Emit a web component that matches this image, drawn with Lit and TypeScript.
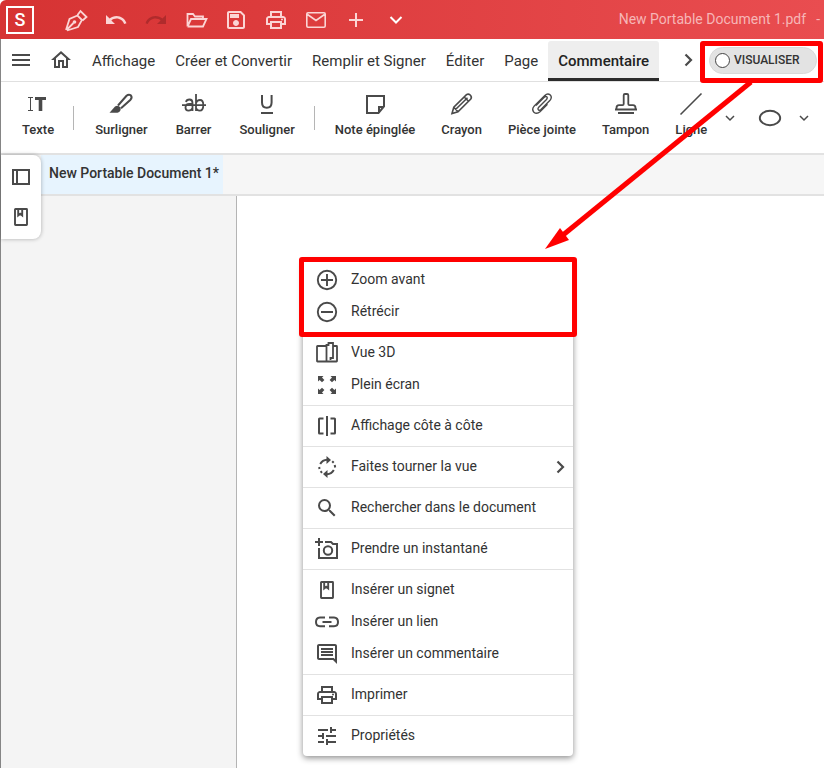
import { LitElement, html, css, svg, nothing, type SVGTemplateResult } from "lit";
import { customElement, property } from "lit/decorators.js";

// Icons share a 24x24 grid. "o" marks outline shapes, "f" filled ones.
const o = (d: string, w = 2) =>
  svg`<path d=${d} fill="none" stroke="currentColor" stroke-width=${w}></path>`;
const f = (d: string) => svg`<path d=${d} fill="currentColor" fill-rule="evenodd"></path>`;

const icons: Record<string, SVGTemplateResult> = {
  pen: svg`${o("M2 22 L5.5 11 L13.5 7.5 L18 12 L14 19 L3 22.5 M2.5 22 L9.5 15 M13.5 7 L16.5 3 L22.5 9 L18.5 12.5", 1.8)}<circle cx="10.5" cy="14" r="1.8" fill="currentColor"></circle>`,
  undo: f("M12.5 8c-2.65 0-5.05.99-6.9 2.6L2 7v9h9l-3.62-3.62c1.39-1.16 3.16-1.88 5.12-1.88 3.54 0 6.55 2.31 7.6 5.5l2.37-.78C21.08 11.03 17.15 8 12.5 8z"),
  redo: f("M18.4 10.6C16.55 8.99 14.15 8 11.5 8c-4.65 0-8.58 3.03-9.96 7.22L3.9 16c1.05-3.19 4.05-5.5 7.6-5.5 1.95 0 3.73.72 5.12 1.88L13 16h9V7l-3.6 3.6z"),
  folder: o("M3.5 18.500 V6 H9 L11 8.500 H19 V11 M3.500 18.500 L7 11 H22.500 L19 18.500 H3.500", 1.8),
  save: f("M17 3H5c-1.11 0-2 .9-2 2v14c0 1.1.89 2 2 2h14c1.1 0 2-.9 2-2V7l-4-4zm2 16H5V5h11.17L19 7.83V19zm-7-7c-1.66 0-3 1.34-3 3s1.34 3 3 3 3-1.34 3-3-1.34-3-3-3zM6 6h9v4H6V6z"),
  print: f("M19 8h-1V3H6v5H5c-1.66 0-3 1.34-3 3v6h4v4h12v-4h4v-6c0-1.66-1.34-3-3-3zM8 5h8v3H8V5zm8 12v2H8v-4h8v2zm2-2v-2H6v2H4v-4c0-.55.45-1 1-1h14c.55 0 1 .45 1 1v4h-2zM17 11.5a1 1 0 1 0 2 0a1 1 0 1 0-2 0z"),
  mail: o("M4 4.8 H20 Q21.2 4.8 21.2 6 V18 Q21.2 19.2 20 19.2 H4 Q2.8 19.2 2.8 18 V6 Q2.8 4.8 4 4.8 Z M3.5 6.5 L12 12.5 L20.5 6.5", 1.6),
  plus: o("M12 5 V19 M5 12 H19"),
  down: o("M6.5 9 L12 14.5 L17.5 9"),
  smallDown: o("M8 10 L12 14 L16 10", 1.5),
  right: o("M8.5 6.5 L14 12 L8.5 17.5", 2.2),
  menu: o("M3 7 H21 M3 12 H21 M3 17 H21"),
  home: f("M12 5.69l5 4.5V18h-2v-6H9v6H7v-7.81l5-4.5M12 3L2 12h3v8h6v-6h2v6h6v-8h3L12 3z"),
  text: svg`${o("M2 5.5 H7 M4.500 5.5 V18.5 M2 18.5 H7", 1)}${f("M9 5H20V8H16.300V19H12.700V8H9Z")}`,
  highlight: svg`${f("M0.500 20.700 L6 14.500 Q9 12.500 11.500 15.500 Q12.500 19.500 8.500 20.700 Z")}${o("M9 13.500 L17.500 3.800 Q19.700 1.800 21.800 3.300 Q23.500 5.300 21.500 7.700 L12 16.300", 2)}`,
  strike: o("M4 10 Q4.500 7.500 7.500 7.500 Q10.500 7.500 10.500 11 V19 M10.500 12 H7.500 Q3.500 12 3.500 15.500 Q3.500 18.700 6.500 18.700 Q9.500 18.700 10.500 16 M14 2 V19 M14 11 Q15 8 18 8 Q21.300 8 21.300 13 Q21.300 18.700 17.700 18.700 Q15 18.700 14 16 M0 13.200 H24", 1.8),
  underline: o("M7 3 V10.500 Q7 15.700 11.800 15.700 Q16.600 15.700 16.600 10.500 V3 M6 21 H18", 2),
  note: o("M4 4 H21 V14.500 L15.500 21 H4 Z M21 15 H16 V21", 2),
  pencil: o("M2 21.500 L3.800 15.200 L16.500 2.700 Q18.300 1.300 20.200 3 Q22.200 5 20.800 7 L8 19.800 Z M14.200 5 L18.600 9.300 M3.800 15.200 L8 19.800 M5.500 17.500 L17.500 5.800", 1.6),
  clip: o("M16.500 7.500 L8.500 15.500 Q7.300 17 8.500 18 Q9.500 18.800 10.700 17.700 L19.800 8.600 Q22.500 5.500 20.300 3 Q17.700 0.800 14.800 3.400 L4.300 13.900 Q1.300 17.300 3.900 20.200 Q6.800 22.600 10 19.700 L17.500 12.200 M16.500 7.500 Q18 5.500 16.500 4.700 Q15.300 4.200 14 5.500 L6 13.500", 1.4),
  stamp: o("M2.500 17 V16 Q2.500 13.200 5 13.200 H8.500 Q9.700 13.200 9.700 12 V3.300 Q9.700 2 11 2 H13 Q14.300 2 14.300 3.300 V12 Q14.300 13.200 15.500 13.200 H19 Q21.500 13.200 21.500 16 V17 M1 17.500 H23 M4 21 H20", 1.8),
  line: o("M1.500 22.500 L22.500 1.500", 1.6),
  ellipse: svg`<ellipse cx="12" cy="12" rx="10.200" ry="7.200" fill="none" stroke="currentColor" stroke-width="1.900"></ellipse>`,
  panel: o("M4 5 H20 V19 H4 Z M8 5 V19", 2),
  bookmark: o("M6.500 4 H17.500 Q18 4 18 4.500 V19.500 Q18 20 17.500 20 H6.500 Q6 20 6 19.500 V4.500 Q6 4 6.500 4 Z M9.200 4 V10.500 L11.200 8.800 L13.200 10.500 V4", 1.9),
  zoomIn: o("M12 2.800 A9.200 9.200 0 1 0 12 21.200 A9.200 9.200 0 1 0 12 2.800 Z M12 6 V18 M6 12 H18", 1.9),
  zoomOut: o("M12 2.800 A9.200 9.200 0 1 0 12 21.200 A9.200 9.200 0 1 0 12 2.800 Z M6 12 H18", 1.9),
  book: o("M11.500 5 H2.500 Q2 5 2 5.500 V20 Q2 20.500 2.500 20.500 H11.500 M11.500 20.500 V4 H13.500 V2 H18 V17 H15.500 V19 M18 5 H21.500 Q22 5 22 5.500 V20 Q22 20.500 21.500 20.500 H11.500", 1.8),
  full: f("M3 3H8.500L7 4.500L9.400 6.900L7 9.300L4.600 6.900L3 8.500ZM21 3V8.500L19.400 6.900L17 9.300L14.600 6.900L17 4.500L15.500 3ZM3 21V15.500L4.600 17.100L7 14.700L9.400 17.100L7 19.500L8.500 21ZM21 21H15.500L17 19.500L14.600 17.100L17 14.700L19.400 17.100L21 15.500Z"),
  side: o("M8.500 4.500 H4.500 Q4 4.500 4 5 V19 Q4 19.500 4.500 19.500 H8.500 M15.500 4.500 H19.500 Q20 4.500 20 5 V19 Q20 19.500 19.500 19.500 H15.500 M12 2 V22", 2),
  rotate: svg`${o("M5.200 9 Q7.500 5 12 4.800 M18.800 15 Q16.500 19 12 19.200 M17.200 6.300 L18.700 7.800 M19.700 10 L20.200 12.500 M4.200 12 L4.500 14 M5.600 16.200 L7 17.800")}${f("M11.500 1 L16 5 L11.500 9ZM12.500 15 L8 19 L12.500 23Z")}`,
  search: f("M15.500 14h-.79l-.28-.27A6.471 6.471 0 0 0 16 9.500 6.500 6.500 0 1 0 9.500 16c1.610 0 3.090-.59 4.230-1.570l.27.28v.79l5 4.990L20.490 19l-4.990-5zm-6 0C7.010 14 5 11.990 5 9.500S7.010 5 9.500 5 14 7.010 14 9.500 11.990 14 9.500 14z"),
  camera: svg`${o("M4 1 V9 M0 5 H8 M10 5 H16 L18 7 H22 V21 H4 V11", 2)}<circle cx="13" cy="13.500" r="4.200" fill="none" stroke="currentColor" stroke-width="2"></circle>`,
  link: o("M10 7.500 H5 Q1 7.800 1 12 Q1 16.200 5 16.200 H10 M14 7.500 H19 Q23 7.800 23 12 Q23 16.200 19 16.200 H14 M7.500 12 H16.500", 2),
  comment: f("M21.990 4c0-1.100-.89-2-1.990-2H4c-1.100 0-2 .9-2 2v12c0 1.100.9 2 2 2h14l4 4-.01-18zM20 4v13.170L18.830 16H4V4h16zM6 12h12v2H6zm0-3h12v2H6zm0-3h12v2H6z"),
  tune: f("M3 17v2h6v-2H3zM3 5v2h10V5H3zm10 16v-2h8v-2h-8v-2h-2v6h2zM7 9v2H3v2h4v2h2V9H7zm14 4v-2H11v2h10zm-6-4h2V7h4V5h-4V3h-2v6z"),
};

@customElement("ui-icon")
class UiIcon extends LitElement {
  static styles = css`
    :host { display: block; flex: none; width: 24px; height: 24px; }
    .glyph { display: block; width: 24px; height: 24px; overflow: visible; }
  `;
  @property() name = "";
  render() {
    return html`<svg class="glyph" viewBox="0 0 24 24" aria-hidden="true">${icons[this.name]}</svg>`;
  }
}

type Entry = { icon: string; label: string; more?: boolean };

const quickActions = [
  ["pen", "Signer"], ["undo", "Annuler"], ["redo", "Rétablir"], ["folder", "Ouvrir"],
  ["save", "Enregistrer"], ["print", "Imprimer"], ["mail", "Courriel"], ["plus", "Ajouter"], ["down", "Plus"],
];
const tabs = ["Affichage", "Créer et Convertir", "Remplir et Signer", "Éditer", "Page", "Commentaire"];
const tools: Entry[][] = [
  [{ icon: "text", label: "Texte" }],
  [
    { icon: "highlight", label: "Surligner" },
    { icon: "strike", label: "Barrer" },
    { icon: "underline", label: "Souligner" },
  ],
  [
    { icon: "note", label: "Note épinglée" },
    { icon: "pencil", label: "Crayon" },
    { icon: "clip", label: "Pièce jointe" },
    { icon: "stamp", label: "Tampon" },
    { icon: "line", label: "Ligne" },
  ],
];
const contextMenu: Entry[][] = [
  [{ icon: "zoomIn", label: "Zoom avant" }, { icon: "zoomOut", label: "Rétrécir" }],
  [{ icon: "book", label: "Vue 3D" }, { icon: "full", label: "Plein écran" }],
  [{ icon: "side", label: "Affichage côte à côte" }],
  [{ icon: "rotate", label: "Faites tourner la vue", more: true }],
  [{ icon: "search", label: "Rechercher dans le document" }],
  [{ icon: "camera", label: "Prendre un instantané" }],
  [
    { icon: "bookmark", label: "Insérer un signet" },
    { icon: "link", label: "Insérer un lien" },
    { icon: "comment", label: "Insérer un commentaire" },
  ],
  [{ icon: "print", label: "Imprimer" }],
  [{ icon: "tune", label: "Propriétés" }],
];

@customElement("app-root")
class AppRoot extends LitElement {
  static styles = css`
    :host {
      display: flex; flex-direction: column; position: relative;
      min-height: 100vh; overflow: hidden;
      font-family: Roboto, "Liberation Sans", sans-serif; color: #333;
      background: #fff;
    }
    * { box-sizing: border-box; }
    button {
      font: inherit; color: inherit; background: none; border: 0; padding: 0; margin: 0;
      display: flex; align-items: center; justify-content: center; white-space: nowrap;
    }
    .titlebar {
      display: flex; align-items: center; height: 39px; padding: 0 4px 0 6px;
      background: linear-gradient(90deg, #d63333, #e94d50);
      border-top-left-radius: 6px; color: #fbd5d5;
    }
    .logo {
      flex: none; width: 28px; height: 28px; border: 2px solid #fff; margin-right: 22px;
      color: #fff; font-size: 18px; font-weight: 500; line-height: 24px; text-align: center;
    }
    .quick { width: 40px; height: 38px; }
    .quick.redo { color: #b02b2c; }
    .quick.down { color: #fff; }
    .filename { margin-left: auto; font-size: 14px; color: #f6b6b7; white-space: nowrap; padding-bottom: 2px; }
    .dash { margin-left: 10px; font-size: 14px; color: #f6b6b7; padding-bottom: 2px; }
    .window {
      display: flex; flex-direction: column; flex: 1; border-left: 1px solid #858585;
    }
    .menubar {
      display: flex; align-items: center; height: 43px; padding: 0 7px 0 8px;
      border-bottom: 1px solid #e0e0e0; font-size: 15px;
    }
    .square { width: 24px; height: 40px; margin-right: 16px; }
    .square.home { margin-right: 9px; }
    .tab { height: 40px; padding: 2px 10px 0; margin-top: 2px; border-bottom: 3px solid transparent; }
    .tab.active {
      background: #eee; border-bottom-color: #2b2b2b; border-radius: 3px 3px 0 0;
      font-weight: 500; color: #222;
    }
    .next { margin-left: 18px; color: #444; }
    .view {
      display: flex; align-items: center; gap: 4px; margin-left: auto; height: 27px; width: 108px;
      padding-left: 5px; border-radius: 14px; background: #e3e3e3; border: 1px solid #d9d9d9;
      font-size: 12px; font-weight: 500; white-space: nowrap;
    }
    .dot {
      appearance: none; margin: 0; width: 15px; height: 15px; flex: none;
      border: 1px solid #444; border-radius: 50%; background: #fff;
    }
    .toolbar {
      display: flex; align-items: flex-start; height: 73px; padding: 10px 0 0 7px;
      border-bottom: 2px solid #e2e2e2;
    }
    .group-tools { display: flex; }
    .tool {
      flex-direction: column; gap: 6px; padding: 0 14px;
      font-size: 13px; font-weight: 500; line-height: 16px;
    }
    .group-tools.dense .tool { padding: 0 13px; }
    .tool ui-icon, .menubar ui-icon, .sidebar ui-icon, .item ui-icon, .shape { color: #4a4a4a; }
    .rule { flex: none; width: 1px; height: 24px; margin: 14px 7px 0 5px; background: #b5b5b5; }
    .shape { flex: none; width: 20px; height: 24px; margin-top: 14px; }
    .shape.wide { width: 24px; margin: 14px 12px 0 18px; }
    .docs { display: flex; height: 41px; padding-left: 40px; background: #f6f6f6; border-bottom: 2px solid #e2e2e2; }
    .doc { width: 182px; background: #e7f4fe; font-size: 14px; font-weight: 500; padding: 0 0 4px 4px; }
    .body { display: flex; flex: 1; }
    .pane { width: 236px; flex: none; background: #f4f4f4; border-right: 1px solid #b4b4b4; }
    .page { flex: 1; background: #fff; }
    .sidebar {
      position: absolute; left: 1px; top: 155px; width: 40px; padding: 2px 0; background: #fff;
      border-radius: 0 8px 8px 0; box-shadow: 0 0 4px rgba(0, 0, 0, .3);
    }
    .sidebar button { width: 40px; height: 40px; }
    .context {
      position: absolute; left: 303px; top: 260px; width: 270px; background: #fff;
      border-radius: 4px; box-shadow: 0 2px 6px rgba(0, 0, 0, .45);
      font-size: 14px; line-height: 16px;
    }
    .group { padding: 4px 0; }
    .group + .group { border-top: 1px solid #e2e2e2; }
    .item { width: 100%; height: 32px; padding: 0 0 0 12px; justify-content: flex-start; gap: 12px; }
    .item .label { padding-bottom: 2px; }
    .item .more { margin-left: auto; }
    .mark { position: absolute; border: 5px solid #f00; border-radius: 3px; pointer-events: none; }
    .mark.zoom { left: 299px; top: 257px; width: 278px; height: 80px; }
    .mark.toggle { right: 1px; top: 41px; width: 123px; height: 42px; }
    .arrow { position: absolute; right: 69px; top: 80px; width: 210px; height: 172px; pointer-events: none; }
  `;

  render() {
    return html`
      <header class="titlebar">
        <div class="logo">S</div>
        ${quickActions.map(
          ([icon, label]) => html`<button class="quick ${icon}" aria-label=${label}><ui-icon name=${icon}></ui-icon></button>`
        )}
        <span class="filename">New Portable Document 1.pdf</span><span class="dash">-</span>
      </header>
      <div class="window">
        <nav class="menubar">
          <button class="square" aria-label="Menu"><ui-icon name="menu"></ui-icon></button>
          <button class="square home" aria-label="Accueil"><ui-icon name="home"></ui-icon></button>
          ${tabs.map((t) => html`<button class="tab ${t === "Commentaire" ? "active" : ""}">${t}</button>`)}
          <button class="next" aria-label="Onglets suivants"><ui-icon name="right"></ui-icon></button>
          <label class="view"><input class="dot" type="checkbox" />VISUALISER</label>
        </nav>
        <div class="toolbar">
          ${tools.map(
            (group, i) => html`${i ? html`<span class="rule"></span>` : nothing}
              <div class="group-tools ${group.length > 3 ? "dense" : ""}">
                ${group.map((t) => html`<button class="tool"><ui-icon name=${t.icon}></ui-icon>${t.label}</button>`)}
              </div>`
          )}
          <button class="shape" aria-label="Options de ligne"><ui-icon name="smallDown"></ui-icon></button>
          <button class="shape wide" aria-label="Ellipse"><ui-icon name="ellipse"></ui-icon></button>
          <button class="shape" aria-label="Options de forme"><ui-icon name="smallDown"></ui-icon></button>
        </div>
        <div class="docs"><button class="doc">New Portable Document 1*</button></div>
        <main class="body">
          <div class="pane"></div>
          <div class="page"></div>
        </main>
      </div>
      <aside class="sidebar">
        <button aria-label="Panneau"><ui-icon name="panel"></ui-icon></button>
        <button aria-label="Signets"><ui-icon name="bookmark"></ui-icon></button>
      </aside>
      <div class="context" role="menu">
        ${contextMenu.map(
          (group) => html`<div class="group">
            ${group.map(
              (m) => html`<button class="item" role="menuitem">
                <ui-icon name=${m.icon}></ui-icon><span class="label">${m.label}</span>
                ${m.more ? html`<ui-icon class="more" name="right"></ui-icon>` : nothing}
              </button>`
            )}
          </div>`
        )}
      </div>
      <div class="mark zoom"></div>
      <div class="mark toggle"></div>
      <svg class="arrow" viewBox="0 0 210 172" aria-hidden="true">
        <path d="M206 2 L18 155" stroke="#f00" stroke-width="5" fill="none"></path>
        <path d="M0 169 L15 148 L24 160 Z" fill="#f00"></path>
      </svg>
    `;
  }
}
